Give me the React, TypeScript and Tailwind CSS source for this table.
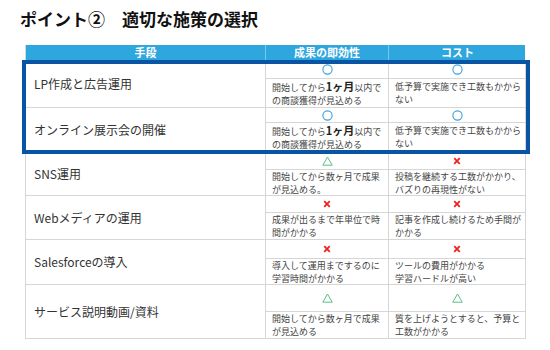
import React from "react";

type Mark = "o" | "tri" | "x";

const oneMonth = (
  <>
    開始してから<b className="text-[11px] font-bold text-[#222]">1ヶ月</b>以内で
  </>
);

const rows: {
  name: string;
  markH: number;
  textH: number;
  speed: Mark;
  cost: Mark;
  speedText: React.ReactNode[];
  costText: React.ReactNode[];
}[] = [
  {
    name: "LP作成と広告運用",
    markH: 19,
    textH: 29,
    speed: "o",
    cost: "o",
    speedText: [oneMonth, "の商談獲得が見込める"],
    costText: ["低予算で実施でき工数もかから", "ない"],
  },
  {
    name: "オンライン展示会の開催",
    markH: 15,
    textH: 29,
    speed: "o",
    cost: "o",
    speedText: [oneMonth, "の商談獲得が見込める"],
    costText: ["低予算で実施でき工数もかから", "ない"],
  },
  {
    name: "SNS運用",
    markH: 18,
    textH: 26,
    speed: "tri",
    cost: "x",
    speedText: ["開始してから数ヶ月で成果", "が見込める。"],
    costText: ["投稿を継続する工数がかかり、", "バズりの再現性がない"],
  },
  {
    name: "Webメディアの運用",
    markH: 17,
    textH: 27,
    speed: "x",
    cost: "x",
    speedText: ["成果が出るまで年単位で時", "間がかかる"],
    costText: ["記事を作成し続けるため手間が", "かかる"],
  },
  {
    name: "Salesforceの導入",
    markH: 19,
    textH: 26,
    speed: "x",
    cost: "x",
    speedText: ["導入して運用までするのに", "学習時間がかかる"],
    costText: ["ツールの費用がかかる", "学習ハードルが高い"],
  },
  {
    name: "サービス説明動画/資料",
    markH: 27,
    textH: 27,
    speed: "tri",
    cost: "tri",
    speedText: ["開始してから数ヶ月で成果", "が見込める"],
    costText: ["質を上げようとすると、予算と", "工数がかかる"],
  },
];

function MarkIcon({ m }: { m: Mark }) {
  if (m === "o")
    return (
      <svg width="11" height="11" viewBox="0 0 11 11">
        <circle cx="5.5" cy="5.5" r="4.6" fill="none" stroke="#3b9fdc" strokeWidth="1.1" />
      </svg>
    );
  if (m === "tri")
    return (
      <svg width="11" height="10" viewBox="0 0 11 10">
        <path d="M5.5 1 L10.2 9.2 L0.8 9.2 Z" fill="none" stroke="#59c084" strokeWidth="1" />
      </svg>
    );
  return (
    <svg width="8" height="8" viewBox="0 0 8 8">
      <path d="M1.2 1.2 L6.8 6.8 M6.8 1.2 L1.2 6.8" stroke="#f02020" strokeWidth="1.8" />
    </svg>
  );
}

function TextCell({ lines }: { lines: React.ReactNode[] }) {
  return (
    <div className="flex flex-col justify-center border-r border-b border-[#d6d6d6] pl-[6px] text-[9px] leading-[13px] whitespace-nowrap text-[#444]">
      {lines.map((l, i) => (
        <div key={i}>{l}</div>
      ))}
    </div>
  );
}

function Row({ r }: { r: (typeof rows)[number] }) {
  return (
    <div
      className="grid grid-cols-[240px_123px_137px]"
      style={{ gridTemplateRows: `${r.markH}px ${r.textH}px` }}
    >
      <div className="row-span-2 flex items-center border-r border-b border-[#d6d6d6] pl-2 text-[12px] text-[#333]">
        {r.name}
      </div>
      <div className="flex items-center justify-center border-r border-b border-[#d6d6d6]">
        <MarkIcon m={r.speed} />
      </div>
      <div className="flex items-center justify-center border-r border-b border-[#d6d6d6]">
        <MarkIcon m={r.cost} />
      </div>
      <TextCell lines={r.speedText} />
      <TextCell lines={r.costText} />
    </div>
  );
}

export default function App() {
  return (
    <div
      className="h-[350px] w-[550px] overflow-hidden bg-white"
      style={{ fontFamily: '"Noto Sans CJK JP", "Noto Sans", sans-serif' }}
    >
      {/* Title */}
      <h1 className="pl-[20px] pt-[7px] text-[17px] leading-[24px] font-bold text-[#111]">
        ポイント②　適切な施策の選択
      </h1>

      {/* Table */}
      <div className="ml-[25px] mt-[14px] w-[500px] border-l border-[#d6d6d6]">
        <div className="grid h-[15px] grid-cols-[240px_123px_137px] bg-[#2ea6de] text-[11px] leading-[15px] font-bold text-white">
          <div className="border-r border-[#7cc6ea] text-center">手段</div>
          <div className="border-r border-[#7cc6ea] text-center">成果の即効性</div>
          <div className="text-center">コスト</div>
        </div>

        <div className="relative">
          <Row r={rows[0]} />
          <Row r={rows[1]} />
          <div className="pointer-events-none absolute -left-[4px] -right-[5px] top-0 -bottom-[2px] border-4 border-[#0a55a3]" />
        </div>

        {rows.slice(2).map((r) => (
          <Row key={r.name} r={r} />
        ))}
      </div>
    </div>
  );
}
